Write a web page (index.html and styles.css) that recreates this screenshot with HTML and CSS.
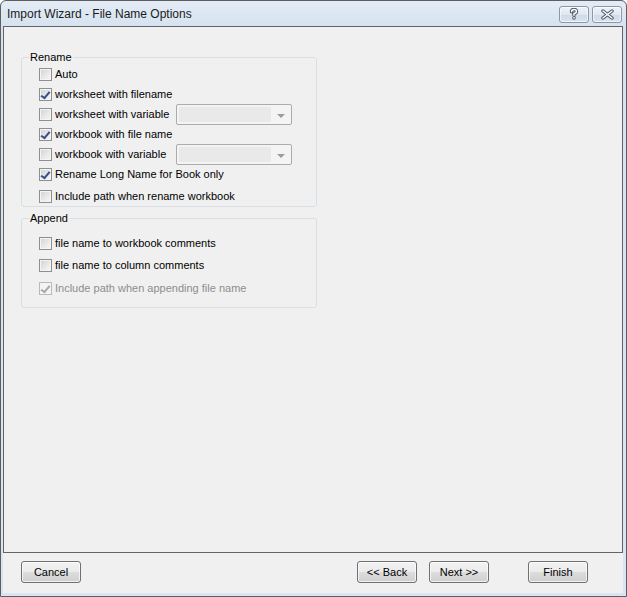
FILE: index.html
```html
<!DOCTYPE html>
<html lang="en">
<head>
  <meta charset="UTF-8">
  <title>Import Wizard - File Name Options</title>
  <link rel="stylesheet" href="styles.css">
</head>
<body>
  <div class="window">
    <!--title bar-->
    <div class="titlebar">
      <span class="title">Import Wizard - File Name Options</span>
      <div class="capButtons">
        <span class="capBtn">
          <svg width="12" height="12" viewBox="0 0 12 12">
            <path class="ol" d="M3.5 3.8 Q3.5 1.5 6 1.5 Q8.5 1.5 8.5 3.6 Q8.5 5.2 6 5.8 L6 7.2 M6 9.6 L6 10"/>
            <path class="in" d="M3.5 3.8 Q3.5 1.5 6 1.5 Q8.5 1.5 8.5 3.6 Q8.5 5.2 6 5.8 L6 7.2 M6 9.6 L6 10"/>
          </svg>
        </span>
        <span class="capBtn">
          <svg width="15" height="11" viewBox="0 0 15 11">
            <path class="ol" d="M3 2 L12 9 M12 2 L3 9"/>
            <path class="in" d="M3 2 L12 9 M12 2 L3 9"/>
          </svg>
        </span>
      </div>
    </div>

    <!--content panel-->
    <div class="panel">
      <fieldset class="group">
        <legend>Rename</legend>
        <label class="opt"><span class="box"></span>Auto</label>
        <label class="opt"><span class="box checked"></span>worksheet with filename</label>
        <div class="opt">
          <label class="optLabel"><span class="box"></span>worksheet with variable</label>
          <div class="combo"><span class="field"></span><span class="arrow"></span></div>
        </div>
        <label class="opt"><span class="box checked"></span>workbook with file name</label>
        <div class="opt">
          <label class="optLabel"><span class="box"></span>workbook with variable</label>
          <div class="combo"><span class="field"></span><span class="arrow"></span></div>
        </div>
        <label class="opt"><span class="box checked"></span>Rename Long Name for Book only</label>
        <label class="opt gap3"><span class="box"></span>Include path when rename workbook</label>
      </fieldset>

      <fieldset class="group append">
        <legend>Append</legend>
        <label class="opt"><span class="box"></span>file name to workbook comments</label>
        <label class="opt gap2"><span class="box"></span>file name to column comments</label>
        <label class="opt gap3 disabled"><span class="box checked"></span>Include path when appending file name</label>
      </fieldset>
    </div>

    <!--buttons-->
    <div class="footer">
      <button class="btn">Cancel</button>
      <button class="btn back">&lt;&lt; Back</button>
      <button class="btn">Next &gt;&gt;</button>
      <button class="btn finish">Finish</button>
    </div>
  </div>
</body>
</html>
```

FILE: styles.css
```css
*{box-sizing: border-box;}
body{
  margin:0;
  font-family:"Liberation Sans", Arial, sans-serif;
  font-size:11px;
  color:#000;
}
.window{
  width:627px;
  height:597px;
  display:flex;
  flex-direction:column;
  border:1px solid #5e5e5e;
  border-radius:6px 6px 0 0;
  background:linear-gradient(#e3ecf6, #d6e2f0 26px, #dae5f2);
  padding:0 3px 3px 2px;
}

/*title bar*/
.titlebar{
  height:25px;
  flex:none;
  display:flex;
  align-items:center;
  justify-content:space-between;
}
.title{
  font-size:12px;
  padding-left:4px;
  color:#1b1b1b;
}
.capButtons{
  display:flex;
  gap:3px;
  margin-right:1px;
  margin-top:1px;
}
.capBtn{
  width:30px;
  height:17px;
  display:flex;
  align-items:center;
  justify-content:center;
  border:1px solid #8b98a8;
  border-radius:3px;
  background:linear-gradient(#eef3f9, #dfe7f1 50%, #cfdae8 51%, #d9e3ef);
  box-shadow:inset 0 0 0 1px rgba(255,255,255,0.6);
}
.capBtn svg path{fill:none; stroke-linecap:round; stroke-linejoin:round;}
.capBtn .ol{stroke:#4c5360; stroke-width:3.4;}
.capBtn .in{stroke:#fff; stroke-width:1.5;}

/*content*/
.panel{
  flex:1;
  background:#f0f0f0;
  border:1px solid #646464;
  padding:24px 0 0 17px;
}
.group{
  width:296px;
  margin:0;
  padding:0 0 0 17px;
  border:1px solid #d5dfe5;
  border-radius:3px;
}
.group legend{
  margin-left:-10px;
  padding:0 1px;
  line-height:13px;
}
.append{
  margin-top:5px;
  padding-top:8px;
  padding-bottom:9px;
}
.opt{
  display:flex;
  align-items:center;
  height:20px;
  white-space:nowrap;
}
.gap2{margin-top:2px;}
.gap3{margin-top:2px;}
.append .gap3{margin-top:3px;}
.optLabel{
  display:flex;
  align-items:center;
  width:137px;
  flex:none;
}
.disabled{color:#8d8d8d;}

/*checkbox*/
.box{
  width:13px; height:13px;
  margin-right:3px;
  flex:none;
  position:relative;
  border:1px solid #8e8f8f;
  background:linear-gradient(135deg, #d2d2d2, #eeeeee 70%, #f6f6f6);
  box-shadow:inset 0 0 0 1px #f4f4f4;
}
.checked::after{
  content:"";
  position:absolute;
  left:3px; top:1px;
  width:3px; height:7px;
  border:solid #3b4f8e;
  border-width:0 2px 2px 0;
  transform:rotate(40deg) skewY(-8deg);
}
.disabled .box{
  border-color:#b9b9b9;
  background:#f4f4f4;
}
.disabled .checked::after{border-color:#a9a9a9;}

/*combobox*/
.combo{
  width:116px;
  height:21px;
  display:flex;
  align-items:stretch;
  border:1px solid #acacac;
  border-radius:2px;
  background:#f4f4f4;
  padding:2px;
}
.field{
  flex:1;
  background:#e9e9e9;
}
.arrow{
  width:18px;
  position:relative;
}
.arrow::after{
  content:"";
  position:absolute;
  left:6px; top:7px;
  border:4px solid transparent;
  border-top:4px solid #9c9c9c;
  border-bottom:0;
}

/*buttons*/
.footer{
  height:40px;
  flex:none;
  display:flex;
  align-items:flex-start;
  background:#f0f0f0;
  padding:8px 35px 0 18px;
}
.btn{
  width:60px;
  height:22px;
  font-family:"Liberation Sans", Arial, sans-serif;
  font-size:11px;
  color:#000;
  border:1px solid #707070;
  border-radius:3px;
  background:linear-gradient(#f2f2f2, #ebebeb 50%, #dddddd 51%, #cfcfcf);
  box-shadow:inset 0 0 0 1px rgba(255,255,255,0.7);
  padding:0;
}
.btn + .btn{margin-left:12px;}
.back{margin-left:auto !important;}
.btn.finish{margin-left:39px;}
```
